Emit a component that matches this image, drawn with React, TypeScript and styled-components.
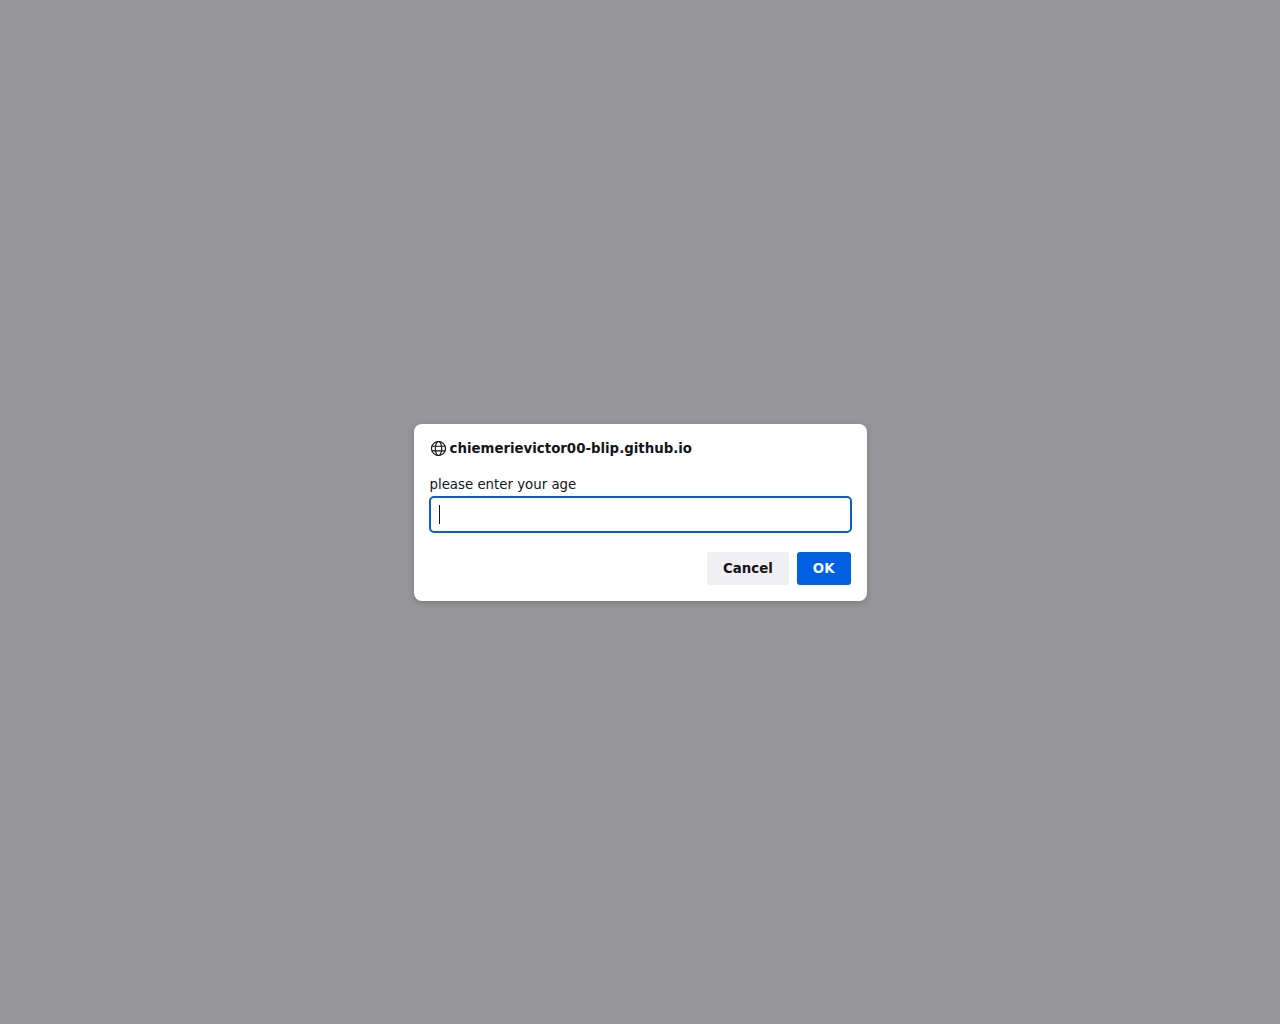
import React from 'react';
import styled, { createGlobalStyle } from 'styled-components';

const GlobalStyle = createGlobalStyle`
  html, body {
    margin: 0;
    height: 100%;
    background: #97969a;
  }
  #root {
    height: 100%;
  }
`;

const Backdrop = styled.div`
  display: flex;
  justify-content: center;
  align-items: flex-start;
  min-height: 1024px;
  padding-top: 424px;
  box-sizing: border-box;
  background: #97969a;
  font-family: "DejaVu Sans", sans-serif;
`;

const Dialog = styled.div`
  width: 453px;
  height: 177px;
  box-sizing: border-box;
  padding: 16px;
  background: #fff;
  border-radius: 8px;
  box-shadow: 0 2px 6px rgba(60, 64, 67, 0.3);
  display: flex;
  flex-direction: column;
`;

const Title = styled.div`
  display: flex;
  align-items: center;
  gap: 4px;
  height: 18px;
  font-size: 13.333px;
  line-height: 18px;
  font-weight: 700;
  color: #15141a;
`;

const Message = styled.div`
  margin-top: 18px;
  font-size: 13.333px;
  line-height: 18px;
  color: #15141a;
`;

const Field = styled.div`
  position: relative;
  margin: 2px -1px 0;
`;

const Input = styled.input`
  display: block;
  width: 100%;
  height: 37px;
  box-sizing: border-box;
  padding: 0 8px;
  border: 2px solid #0a60c2;
  border-radius: 5px;
  outline: none;
  background: #fff;
  caret-color: transparent;
  font: 13.333px "DejaVu Sans", sans-serif;
`;

const Caret = styled.span`
  position: absolute;
  left: 10px;
  top: 9px;
  width: 1px;
  height: 19px;
  background: #15141a;
`;

const Actions = styled.div`
  display: flex;
  justify-content: flex-end;
  gap: 8px;
  margin-top: 19px;
`;

const Button = styled.button<{ $primary?: boolean }>`
  height: 33px;
  padding: 0 16px;
  border: 0;
  border-radius: 3px;
  font: 700 13.333px "DejaVu Sans", sans-serif;
  background: ${(p) => (p.$primary ? '#0060df' : '#f0f0f2')};
  color: ${(p) => (p.$primary ? '#fbfbfe' : '#15141a')};
`;

const Globe = () => (
  <svg width="16" height="16" viewBox="0 0 16 16" fill="none" stroke="#15141a" strokeWidth="1.15">
    <circle cx="8.5" cy="7.5" r="7" />
    <ellipse cx="8.5" cy="7.5" rx="3.2" ry="7" />
    <path d="M1.5 5.2h14M1.5 9.8h14" />
  </svg>
);

const App = () => {
  return (
    <Backdrop>
      <GlobalStyle />
      <Dialog>
        <Title>
          <Globe />
          chiemerievictor00-blip.github.io
        </Title>
        <Message>please enter your age</Message>
        <Field>
          <Input />
          <Caret />
        </Field>
        <Actions>
          <Button>Cancel</Button>
          <Button $primary>OK</Button>
        </Actions>
      </Dialog>
    </Backdrop>
  );
};

export default App;
